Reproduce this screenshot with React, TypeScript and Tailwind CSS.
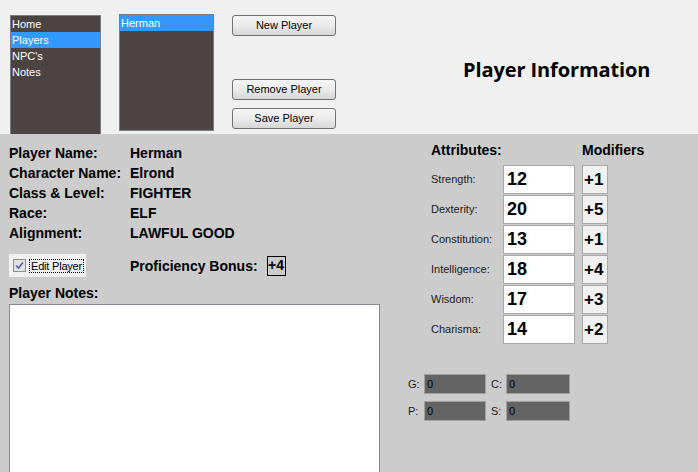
import React from 'react';

const listFont = { fontFamily: '"Liberation Sans", Arial, sans-serif' };

function ListBox({ items, selected, className }: { items: string[]; selected: number; className: string }) {
  return (
    <div className={`bg-[#4b4442] border border-[#7c7c84] ${className}`}>
      {items.map((item, i) => (
        <div
          key={item}
          className={`h-[16px] pl-[1px] text-[11px] leading-[16px] text-white ${i === selected ? 'bg-[#3399ff]' : ''}`}
        >
          {item}
        </div>
      ))}
    </div>
  );
}

function WinButton({ label, className = '' }: { label: string; className?: string }) {
  return (
    <button
      className={`h-[21px] w-[104px] rounded-[3px] border border-[#707070] bg-linear-to-b from-[#f4f4f4] via-[#ebebeb] to-[#d6d6d6] text-[11px] leading-[19px] text-black ${className}`}
    >
      {label}
    </button>
  );
}

const info = [
  ['Player Name:', 'Herman'],
  ['Character Name:', 'Elrond'],
  ['Class & Level:', 'FIGHTER'],
  ['Race:', 'ELF'],
  ['Alignment:', 'LAWFUL GOOD'],
];

const attributes = [
  ['Strength:', '12', '+1'],
  ['Dexterity:', '20', '+5'],
  ['Constitution:', '13', '+1'],
  ['Intelligence:', '18', '+4'],
  ['Wisdom:', '17', '+3'],
  ['Charisma:', '14', '+2'],
];

function Coin({ label, width }: { label: string; width: string }) {
  return (
    <>
      <span className="text-[11px] leading-[20px] text-[#1a1a1a]">{label}</span>
      <div className={`h-[20px] ${width} border border-[#a0a0a0] bg-[#646464] pl-[2px] text-[11px] leading-[18px] text-black`}>0</div>
    </>
  );
}

export default function App() {
  return (
    <div className="flex h-[472px] w-[698px] flex-col overflow-hidden" style={listFont}>
      {/* Top navigation strip */}
      <div className="flex h-[134px] shrink-0 items-start bg-[#f0f0f0] pl-[10px]">
        <ListBox items={['Home', 'Players', "NPC's", 'Notes']} selected={1} className="mt-[15px] h-[119px] w-[91px] border-b-0" />
        <ListBox items={['Herman']} selected={0} className="mt-[14px] ml-[18px] h-[117px] w-[95px]" />
        <div className="ml-[18px] mt-[15px] flex flex-col">
          <WinButton label="New Player" />
          <WinButton label="Remove Player" className="mt-[43px]" />
          <WinButton label="Save Player" className="mt-[8px]" />
        </div>
        <div
          className="ml-[127px] mt-[60px] text-[20px] font-bold leading-[20px] tracking-[-0.1px] text-black"
          style={{ fontFamily: '"Open Sans", sans-serif' }}
        >
          Player Information
        </div>
      </div>

      {/* Player details */}
      <div className="flex flex-1 bg-[#cccccc]">
        <div className="flex w-[380px] shrink-0 flex-col pl-[9px] pt-[9px]">
          {info.map(([label, value]) => (
            <div key={label} className="flex h-[20px] text-[14px] font-bold leading-[20px] text-black">
              <span className="w-[121px]">{label}</span>
              <span>{value}</span>
            </div>
          ))}
          <div className="mt-[11px] flex items-center">
            <div className="flex h-[23px] w-[77px] shrink-0 items-center whitespace-nowrap bg-[#f0f0f0] pl-[4px]">
              <div className="flex h-[13px] w-[13px] shrink-0 items-center justify-center border border-[#8f8f8f] bg-[#e2e2e2]">
                <svg width="9" height="9" viewBox="0 0 9 9">
                  <path d="M1 4.5 L3.5 7 L8 1.5" fill="none" stroke="#4a5fa6" strokeWidth="1.6" />
                </svg>
              </div>
              <span className="ml-[3px] border border-dotted border-black px-[1px] text-[11px] leading-[12px] tracking-[-0.2px] text-black">
                Edit Player
              </span>
            </div>
            <span className="ml-[44px] text-[14px] font-bold leading-[20px] text-black">Proficiency Bonus:</span>
            <div className="ml-[9px] flex h-[20px] w-[19px] items-center justify-center border border-black text-[14px] font-bold text-black">
              +4
            </div>
          </div>
          <div className="mt-[6px] h-[20px] text-[14px] font-bold leading-[20px] text-black">Player Notes:</div>
          <textarea className="mt-[1px] h-[200px] w-[371px] resize-none border border-[#8a8a94] bg-white outline-none" />
        </div>

        <div className="ml-[28px] flex flex-col pt-[6px]">
          <div className="flex h-[20px] pl-[23px] text-[14px] font-bold leading-[20px] text-black">
            <span className="w-[151px]">Attributes:</span>
            <span>Modifiers</span>
          </div>
          <div className="mt-[5px] flex flex-col gap-[1px] pl-[23px]">
            {attributes.map(([label, value, mod]) => (
              <div key={label} className="flex h-[29px] items-center">
                <span className="w-[72px] text-[11px] text-[#1a1a1a]">{label}</span>
                <div className="flex h-[29px] w-[72px] items-center border border-[#a8a8a8] bg-white pl-[3px] text-[18px] font-bold text-black">
                  {value}
                </div>
                <div className="ml-[7px] flex h-[29px] w-[26px] items-center border border-[#a8a8a8] bg-[#f0f0f0] pl-[1px] text-[17px] font-bold text-black">
                  {mod}
                </div>
              </div>
            ))}
          </div>
          <div className="mt-[30px] grid grid-cols-[16px_62px_5px_15px_64px] gap-y-[7px]">
            <Coin label="G:" width="w-[62px]" />
            <span />
            <Coin label="C:" width="w-[64px]" />
            <Coin label="P:" width="w-[62px]" />
            <span />
            <Coin label="S:" width="w-[64px]" />
          </div>
        </div>
      </div>
    </div>
  );
}
